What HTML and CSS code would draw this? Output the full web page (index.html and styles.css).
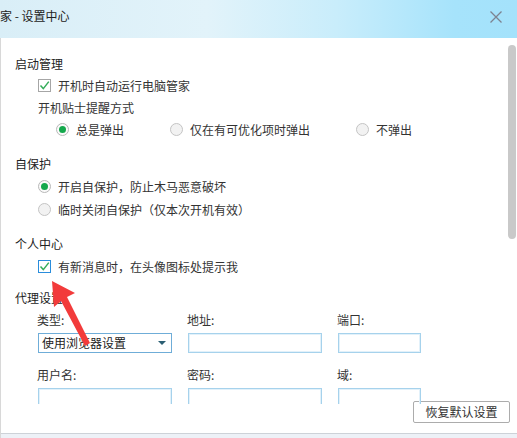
FILE: index.html
```html
<!DOCTYPE html>
<html lang="zh-CN">
<head>
<meta charset="utf-8">
<title>设置中心</title>
<link rel="stylesheet" href="styles.css">
</head>
<body>
<div class="window">
  <div class="titlebar">
    <span class="title">家 - 设置中心</span>
    <svg class="close" width="12" height="12" viewBox="0 0 12 12"><path d="M0.5 0.5 L11.5 11.5 M11.5 0.5 L0.5 11.5" stroke="#7d8390" stroke-width="1.3" fill="none"/></svg>
  </div>
  <div class="body">
    <div class="scroll">
      <div class="content">
        <div class="sec-title">启动管理</div>
        <div class="row ind1 r-cb">
          <span class="cb"><svg width="13" height="13" viewBox="0 0 13 13"><path d="M2.5 6.5 L5.3 9.6 L10.8 2.6" stroke="#35ad5a" stroke-width="1.5" fill="none"/></svg></span>
          <span>开机时自动运行电脑管家</span>
        </div>
        <div class="row ind1 r-lbl">开机贴士提醒方式</div>
        <div class="row ind2 radios">
          <span class="opt"><span class="radio on"></span>总是弹出</span>
          <span class="opt"><span class="radio"></span>仅在有可优化项时弹出</span>
          <span class="opt"><span class="radio"></span>不弹出</span>
        </div>

        <div class="sec-title s2">自保护</div>
        <div class="row ind1 r-23"><span class="opt"><span class="radio on"></span>开启自保护，防止木马恶意破坏</span></div>
        <div class="row ind1 r-23"><span class="opt"><span class="radio"></span>临时关闭自保护（仅本次开机有效）</span></div>

        <div class="sec-title s3">个人中心</div>
        <div class="row ind1 r-23">
          <span class="cb focus"><svg width="13" height="13" viewBox="0 0 13 13"><path d="M2.5 6.5 L5.3 9.6 L10.8 2.6" stroke="#35ad5a" stroke-width="1.5" fill="none"/></svg></span>
          <span>有新消息时，在头像图标处提示我</span>
        </div>

        <div class="sec-title s4">代理设置</div>
        <div class="proxy">
          <div class="plabel">类型:</div>
          <div class="plabel">地址:</div>
          <div class="plabel">端口:</div>
          <div class="select"><span>使用浏览器设置</span><span class="caret"></span></div>
          <div class="input"></div>
          <div class="input short"></div>
          <div class="plabel gap">用户名:</div>
          <div class="plabel gap">密码:</div>
          <div class="plabel gap">域:</div>
          <div class="input"></div>
          <div class="input"></div>
          <div class="input short"></div>
        </div>
      </div>
      <div class="scrollbar"></div>
    </div>
    <div class="footer"><button class="reset">恢复默认设置</button></div>
    <div class="bottom"></div>
  </div>
  <svg class="arrow" width="100" height="80" viewBox="40 275 60 80"><polygon points="52,281 75,293 67,297 90,343 85,346 61,301 54,307" fill="#f23b3b"/></svg>
</div>
</body>
</html>
```

FILE: styles.css
```css
* { box-sizing: border-box; }
html, body { margin: 0; padding: 0; background: #fff; }
body {
  font-family: "Noto Sans CJK SC", "Noto Sans", sans-serif;
  font-size: 12px;
  color: #333;
}
.window {
  position: relative;
  width: 517px;
  height: 438px;
  overflow: hidden;
  background: #fff;
}
.titlebar {
  height: 38px;
  display: flex;
  align-items: flex-start;
  justify-content: space-between;
  padding-top: 5px;
  background: linear-gradient(to right, #d9eef7 0%, #e2f3fa 40%, #c9edfb 65%, #a6e3fb 88%, #a4e2fb 100%);
}
.title {
  margin-left: 0;
  line-height: 22px;
  color: #222;
}
.close { margin: 6px 15px 0 0; }
.body {
  height: 400px;
  border-left: 1px solid #d8d8d8;
  display: flex;
  flex-direction: column;
}
.scroll {
  position: relative;
  height: 366px;
  overflow: hidden;
}
.content { padding: 15px 0 0 14px; }
.sec-title { height: 22px; line-height: 22px; color: #222; }
.s2 { margin-top: 12px; }
.s3 { margin-top: 12px; }
.s4 { margin-top: 9px; }
.row {
  display: flex;
  align-items: center;
  height: 22px;
}
.r-cb { height: 21px; }
.r-23 { height: 23px; }
.radios { height: 23px; }
.ind1 { padding-left: 23px; }
.ind2 { padding-left: 41px; gap: 46px; }
.opt { display: flex; align-items: center; gap: 7px; }
.cb {
  width: 13px;
  height: 13px;
  border: 1px solid #a6a6a6;
  background: #fff;
  margin-right: 7px;
  display: flex;
  align-items: center;
  justify-content: center;
}
.cb svg { flex: none; }
.cb.focus { border-color: #2a8ddc; }
.radio {
  width: 13px;
  height: 13px;
  border-radius: 50%;
  border: 1px solid #c4c4c4;
  background: #f2f2f2;
  display: flex;
  align-items: center;
  justify-content: center;
}
.radio.on { background: #fafafa; border-color: #b8b8b8; }
.radio.on::after {
  content: "";
  width: 7px;
  height: 7px;
  border-radius: 50%;
  background: #14a84c;
}
.proxy {
  margin-left: 22px;
  display: grid;
  grid-template-columns: 150px 150px 100px;
}
.plabel { height: 22px; line-height: 22px; }
.plabel.gap { margin-top: 11px; }
.select, .input {
  margin: 2px 0 0 1px;
  height: 20px;
  width: 134px;
}
.input {
  border: 1px solid #a6d2ec;
  box-shadow: inset 0 0 0 1px #e2f1fa;
}
.input.short { width: 83px; }
.select {
  border: 1px solid #6fadd8;
  display: flex;
  align-items: center;
  justify-content: space-between;
  padding: 0 5px 0 3px;
  line-height: 18px;
  color: #222;
}
.caret {
  width: 0;
  height: 0;
  border-left: 4px solid transparent;
  border-right: 4px solid transparent;
  border-top: 4px solid #2b5f73;
}
.scrollbar {
  position: absolute;
  top: 7px;
  right: 1px;
  width: 8px;
  height: 194px;
  border-radius: 4px;
  background: #c9c9c9;
}
.footer {
  height: 29px;
  display: flex;
  justify-content: flex-end;
  align-items: flex-start;
}
.reset {
  margin: -3px 7px 0 0;
  width: 97px;
  height: 22px;
  padding: 0;
  border: 1px solid #acacac;
  border-radius: 2px;
  background: #fff;
  font-family: inherit;
  font-size: 12px;
  color: #333;
  line-height: 20px;
}
.bottom {
  flex: 1;
  border-top: 1px solid #cdd2d8;
  background: #edf1f7;
}
.arrow {
  position: absolute;
  left: 40px;
  top: 275px;
  width: 60px;
  height: 80px;
}
```
